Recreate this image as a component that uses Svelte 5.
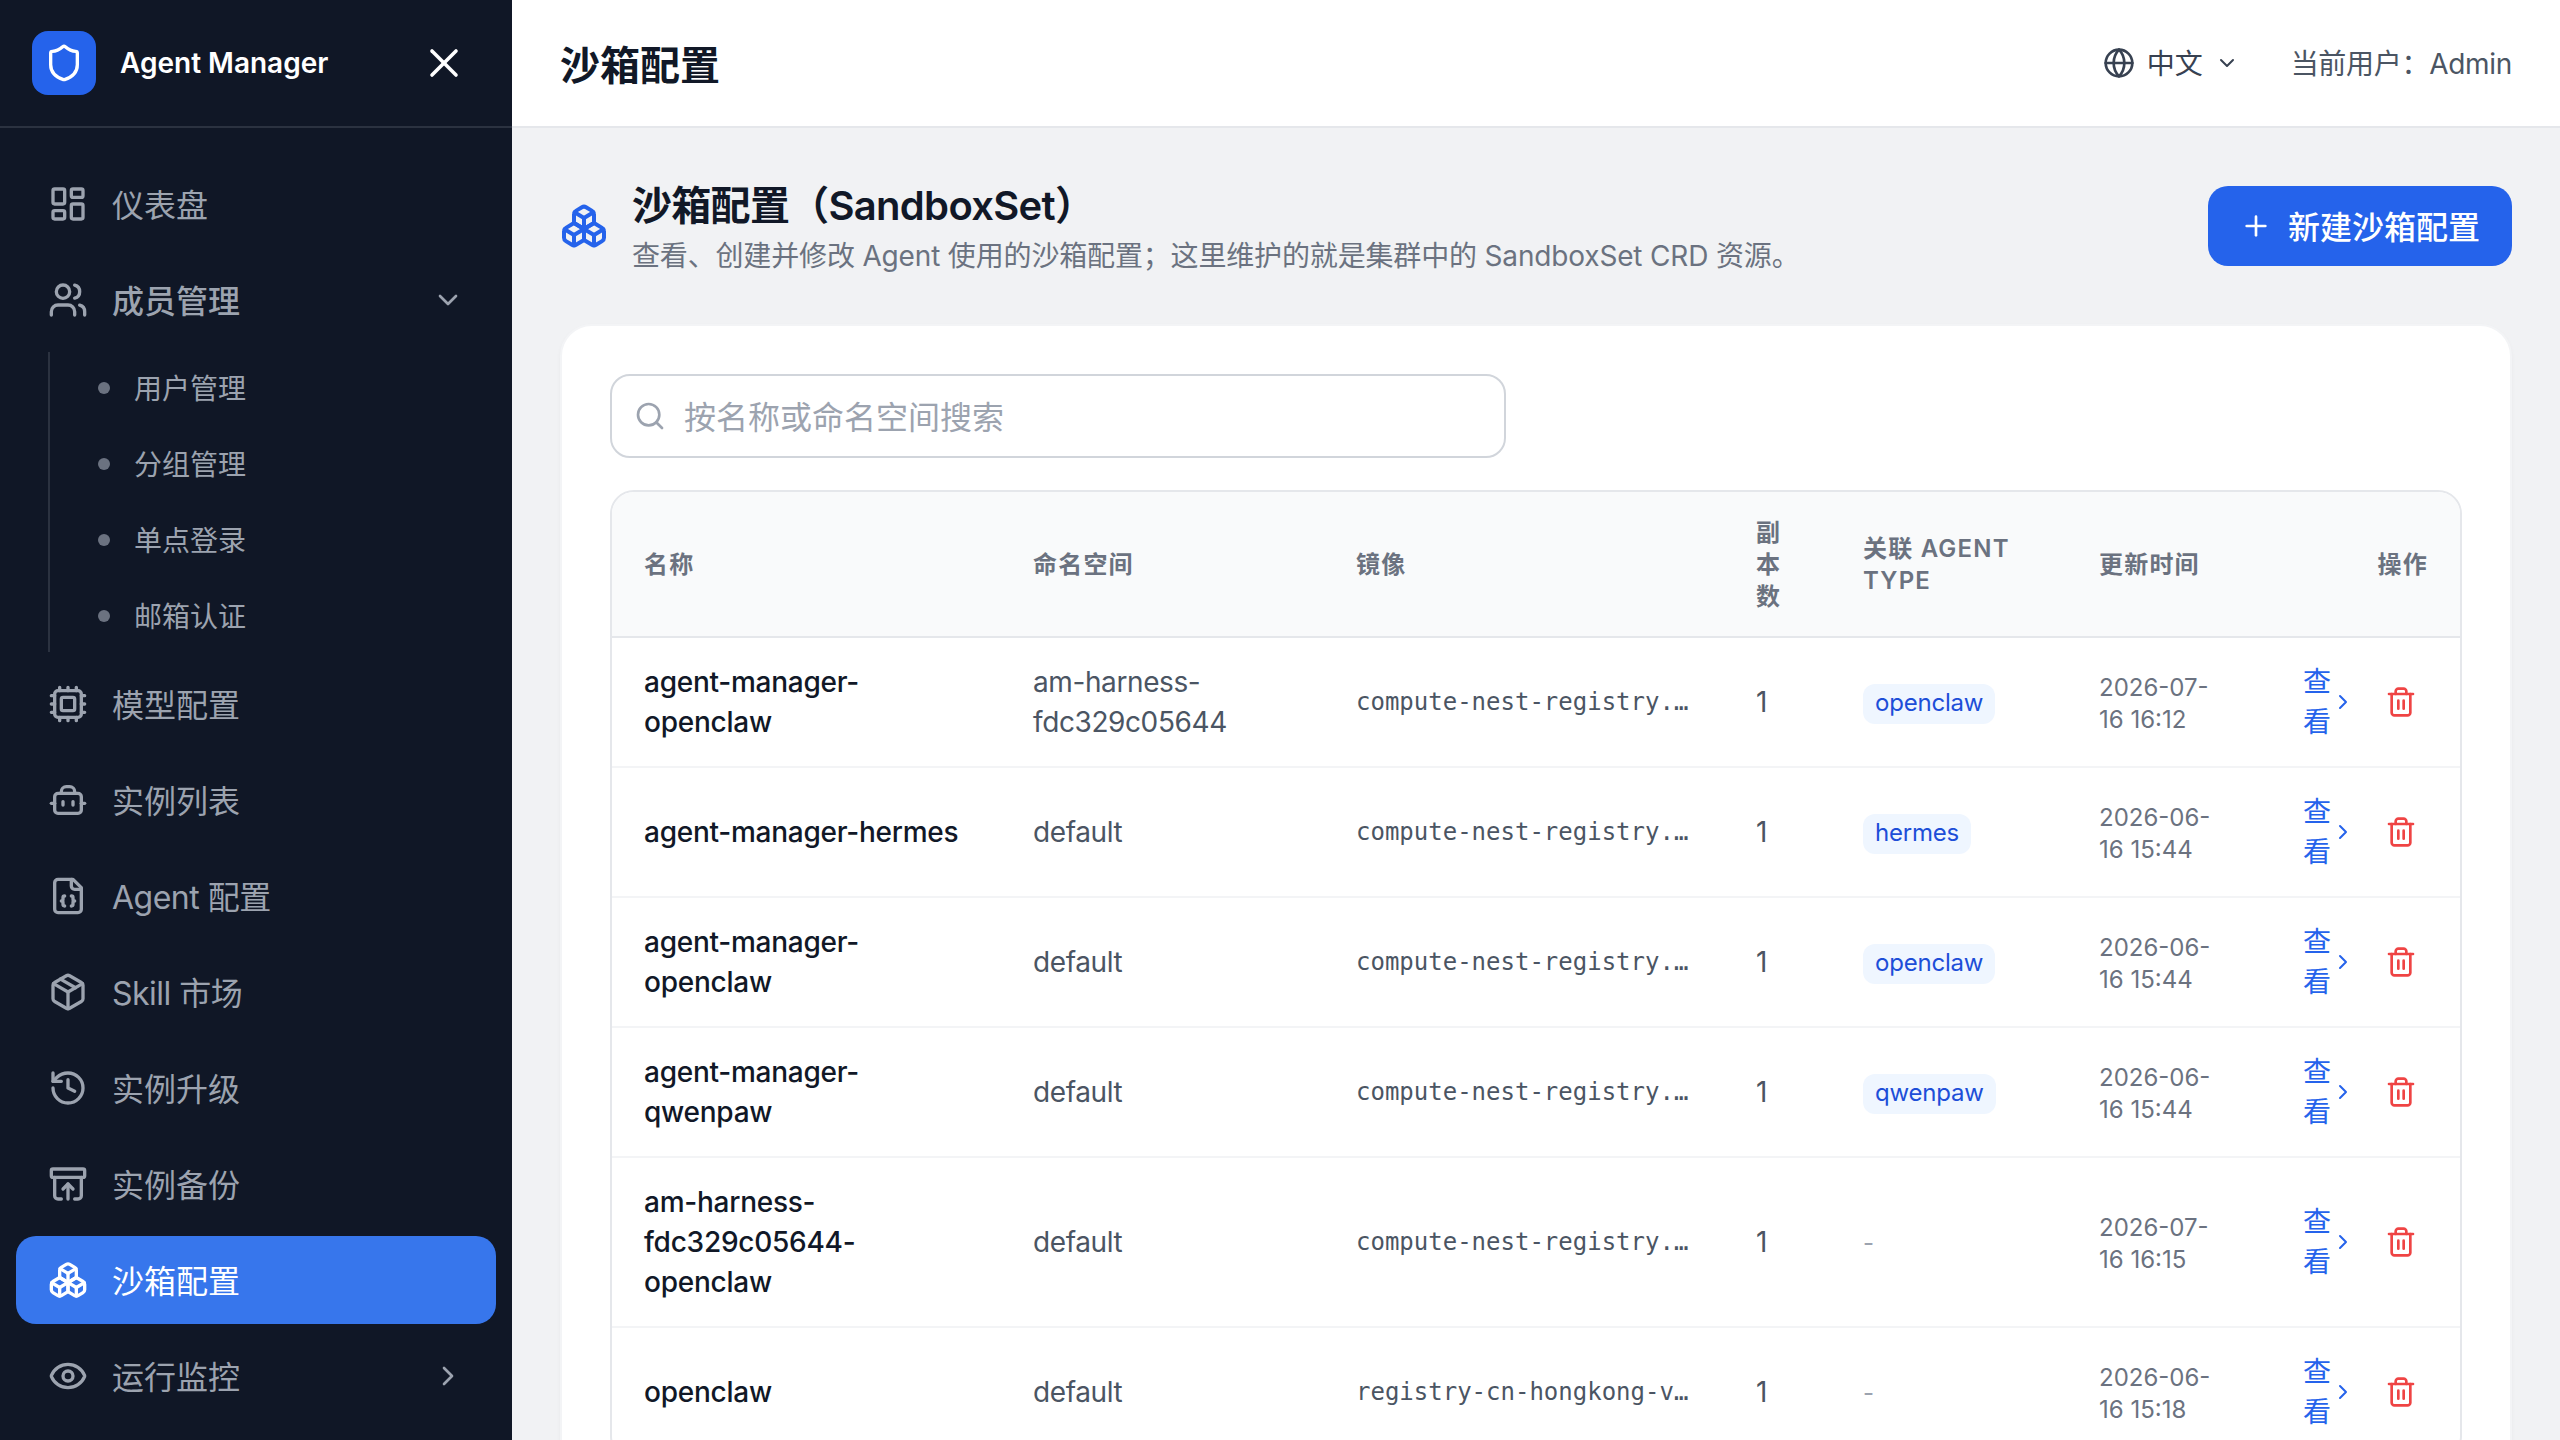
<script>
const icons = {
  shield: '<path d="M20 13c0 5-3.5 7.5-7.66 8.95a1 1 0 0 1-.67-.01C7.5 20.5 4 18 4 13V6a1 1 0 0 1 1-1c2 0 4.5-1.2 6.24-2.72a1.17 1.17 0 0 1 1.52 0C14.51 3.81 17 5 19 5a1 1 0 0 1 1 1z"/>',
  x: '<path d="M18 6 6 18"/><path d="m6 6 12 12"/>',
  dashboard: '<rect width="7" height="9" x="3" y="3" rx="1"/><rect width="7" height="5" x="14" y="3" rx="1"/><rect width="7" height="9" x="14" y="12" rx="1"/><rect width="7" height="5" x="3" y="16" rx="1"/>',
  users: '<path d="M16 21v-2a4 4 0 0 0-4-4H6a4 4 0 0 0-4 4v2"/><circle cx="9" cy="7" r="4"/><path d="M22 21v-2a4 4 0 0 0-3-3.87"/><path d="M16 3.13a4 4 0 0 1 0 7.75"/>',
  cpu: '<path d="M12 20v2M12 2v2M17 20v2M17 2v2M2 12h2M2 17h2M2 7h2M20 12h2M20 17h2M20 7h2M7 20v2M7 2v2"/><rect x="4" y="4" width="16" height="16" rx="2"/><rect x="8" y="8" width="8" height="8" rx="1"/>',
  bot: '<path d="M8 8V7a3 3 0 0 1 3-3h2a3 3 0 0 1 3 3v1"/><rect width="16" height="12" x="4" y="8" rx="2"/><path d="M2 14h2"/><path d="M20 14h2"/><path d="M15 13v2"/><path d="M9 13v2"/>',
  file: '<path d="M15 2H6a2 2 0 0 0-2 2v16a2 2 0 0 0 2 2h12a2 2 0 0 0 2-2V7Z"/><path d="M14 2v4a2 2 0 0 0 2 2h4"/><path d="M10 12a1 1 0 0 0-1 1v1a1 1 0 0 1-1 1 1 1 0 0 1 1 1v1a1 1 0 0 0 1 1"/><path d="M14 18a1 1 0 0 0 1-1v-1a1 1 0 0 1 1-1 1 1 0 0 1-1-1v-1a1 1 0 0 0-1-1"/>',
  pack: '<path d="M11 21.73a2 2 0 0 0 2 0l7-4A2 2 0 0 0 21 16V8a2 2 0 0 0-1-1.73l-7-4a2 2 0 0 0-2 0l-7 4A2 2 0 0 0 3 8v8a2 2 0 0 0 1 1.73z"/><path d="M12 22V12"/><path d="m3.3 7 8.7 5 8.7-5"/><path d="m7.5 4.27 9 5.15"/>',
  history: '<path d="M3 12a9 9 0 1 0 9-9 9.75 9.75 0 0 0-6.74 2.74L3 8"/><path d="M3 3v5h5"/><path d="M12 7v5l4 2"/>',
  archive: '<rect width="20" height="5" x="2" y="3" rx="1"/><path d="M4 8v11a2 2 0 0 0 2 2h2"/><path d="M20 8v11a2 2 0 0 1-2 2h-2"/><path d="m9 15 3-3 3 3"/><path d="M12 12v9"/>',
  boxes: '<path d="M2.97 12.92A2 2 0 0 0 2 14.63v3.24a2 2 0 0 0 .97 1.71l3 1.8a2 2 0 0 0 2.06 0L12 19v-5.5l-5-3-4.03 2.42Z"/><path d="m7 16.5-4.74-2.85"/><path d="m7 16.5 5-3"/><path d="M7 16.5v5.17"/><path d="M12 13.5V19l3.97 2.38a2 2 0 0 0 2.06 0l3-1.8a2 2 0 0 0 .97-1.71v-3.24a2 2 0 0 0-.97-1.71L17 10.5l-5 3Z"/><path d="m17 16.5-5-3"/><path d="m17 16.5 4.74-2.85"/><path d="M17 16.5v5.17"/><path d="M7.97 4.42A2 2 0 0 0 7 6.13v4.37l5 3 5-3V6.13a2 2 0 0 0-.97-1.71l-3-1.8a2 2 0 0 0-2.06 0l-3 1.8Z"/><path d="M12 8 7.26 5.15"/><path d="m12 8 4.74-2.85"/><path d="M12 13.5V8"/>',
  eye: '<path d="M2.062 12.348a1 1 0 0 1 0-.696 10.75 10.75 0 0 1 19.876 0 1 1 0 0 1 0 .696 10.75 10.75 0 0 1-19.876 0"/><circle cx="12" cy="12" r="3"/>',
  globe: '<circle cx="12" cy="12" r="10"/><path d="M12 2a14.5 14.5 0 0 0 0 20 14.5 14.5 0 0 0 0-20"/><path d="M2 12h20"/>',
  search: '<path d="m21 21-4.34-4.34"/><circle cx="11" cy="11" r="8"/>',
  plus: '<path d="M5 12h14"/><path d="M12 5v14"/>',
  down: '<path d="m6 9 6 6 6-6"/>',
  right: '<path d="m9 18 6-6-6-6"/>',
  trash: '<path d="M3 6h18"/><path d="M19 6v14c0 1-1 2-2 2H7c-1 0-2-1-2-2V6"/><path d="M8 6V4c0-1 1-2 2-2h4c1 0 2 1 2 2v2"/><line x1="10" x2="10" y1="11" y2="17"/><line x1="14" x2="14" y1="11" y2="17"/>'
};

const subItems = ['用户管理', '分组管理', '单点登录', '邮箱认证'];

const navAfter = [
  { icon: 'cpu', label: '模型配置' },
  { icon: 'bot', label: '实例列表' },
  { icon: 'file', label: 'Agent 配置', latin: true },
  { icon: 'pack', label: 'Skill 市场', latin: true },
  { icon: 'history', label: '实例升级' },
  { icon: 'archive', label: '实例备份' },
  { icon: 'boxes', label: '沙箱配置', active: true }
];

const longImage = 'compute-nest-registry.cn-hangzhou.cr.aliyuncs.com/agent/sandbox:latest';

const rows = [
  { name: 'agent-manager-openclaw', ns: 'am-harness-fdc329c05644', image: longImage, agent: 'openclaw', time: '2026-07-16 16:12' },
  { name: 'agent-manager-hermes', ns: 'default', image: longImage, agent: 'hermes', time: '2026-06-16 15:44' },
  { name: 'agent-manager-openclaw', ns: 'default', image: longImage, agent: 'openclaw', time: '2026-06-16 15:44' },
  { name: 'agent-manager-qwenpaw', ns: 'default', image: longImage, agent: 'qwenpaw', time: '2026-06-16 15:44' },
  { name: 'am-harness-fdc329c05644-openclaw', ns: 'default', image: longImage, agent: '', time: '2026-07-16 16:15' },
  { name: 'openclaw', ns: 'default', image: 'registry-cn-hongkong-vpc.ack.aliyuncs.com/openclaw/sandbox:latest', agent: '', time: '2026-06-16 15:18' }
];
</script>

{#snippet icon(name, size, sw = 2)}
  <svg class="icon" width={size} height={size} viewBox="0 0 24 24" fill="none" stroke="currentColor" stroke-width={sw} stroke-linecap="round" stroke-linejoin="round">{@html icons[name]}</svg>
{/snippet}

<div class="app">
  <aside class="sidebar">
    <div class="brand">
      <div class="logo">{@render icon('shield', 40)}</div>
      <span class="brand-name">Agent Manager</span>
      <button class="close">{@render icon('x', 48, 1.8)}</button>
    </div>
    <nav class="nav">
      <div class="item">{@render icon('dashboard', 40)}<span class="label">仪表盘</span></div>
      <div class="item group">
        {@render icon('users', 40)}<span class="label">成员管理</span>
        <span class="caret">{@render icon('down', 32)}</span>
      </div>
      <div class="sub">
        {#each subItems as s}
          <div class="sub-item"><i class="dot"></i><span class="label">{s}</span></div>
        {/each}
      </div>
      {#each navAfter as n}
        <div class="item" class:active={n.active} class:latin={n.latin}>{@render icon(n.icon, 40)}<span class="label">{n.label}</span></div>
      {/each}
      <div class="item">
        {@render icon('eye', 40)}<span class="label">运行监控</span>
        <span class="caret">{@render icon('right', 32)}</span>
      </div>
    </nav>
  </aside>

  <div class="main">
    <header class="topbar">
      <h1>沙箱配置</h1>
      <div class="top-right">
        <div class="lang">
          {@render icon('globe', 32)}<span class="label">中文</span>
          {@render icon('down', 24)}
        </div>
        <div class="user">当前用户：Admin</div>
      </div>
    </header>

    <main class="content">
      <div class="page-head">
        <div class="head-left">
          <span class="head-icon">{@render icon('boxes', 48)}</span>
          <div>
            <h2>沙箱配置（SandboxSet）</h2>
            <p>查看、创建并修改 Agent 使用的沙箱配置；这里维护的就是集群中的 SandboxSet CRD 资源。</p>
          </div>
        </div>
        <button class="primary">{@render icon('plus', 32)}<span class="label">新建沙箱配置</span></button>
      </div>

      <section class="card">
        <div class="search">
          {@render icon('search', 32)}
          <span class="label">按名称或命名空间搜索</span>
        </div>
        <div class="table-wrap">
          <table>
            <colgroup>
              <col style="width:389px" />
              <col style="width:323px" />
              <col style="width:400px" />
              <col style="width:107px" />
              <col style="width:236px" />
              <col style="width:184px" />
              <col />
            </colgroup>
            <thead>
              <tr>
                <th>名称</th>
                <th>命名空间</th>
                <th>镜像</th>
                <th>副本数</th>
                <th>关联 Agent Type</th>
                <th>更新时间</th>
                <th class="right">操作</th>
              </tr>
            </thead>
            <tbody>
              {#each rows as r}
                <tr>
                  <td class="name">{r.name}</td>
                  <td class="ns">{r.ns}</td>
                  <td><div class="image">{r.image}</div></td>
                  <td class="ns">1</td>
                  <td>
                    {#if r.agent}
                      <span class="tag">{r.agent}</span>
                    {:else}
                      <span class="none">-</span>
                    {/if}
                  </td>
                  <td class="time">{r.time}</td>
                  <td>
                    <div class="ops">
                      <a class="view" href="#top"><span>查看</span>{@render icon('right', 24)}</a>
                      <button class="del">{@render icon('trash', 32)}</button>
                    </div>
                  </td>
                </tr>
              {/each}
            </tbody>
          </table>
        </div>
      </section>
    </main>
  </div>
</div>

<style>
  :global(body) {
    margin: 0;
    font-family: Inter, "Noto Sans CJK SC", sans-serif;
  }

  .app {
    display: flex;
    height: 100vh;
    overflow: hidden;
    background: #f1f2f4;
  }

  .icon {
    display: block;
    flex: none;
  }

  /* CJK sits a little low in Noto compared to the reference font */
  .label {
    margin-top: -3px;
  }

  button {
    font: inherit;
    border: 0;
    background: none;
    padding: 0;
    cursor: pointer;
  }

  /* sidebar */
  .sidebar {
    width: 512px;
    flex: none;
    background: #101726;
    color: #9ca3af;
  }

  .brand {
    display: flex;
    align-items: center;
    gap: 24px;
    padding: 0 32px;
    box-sizing: border-box;
    border-bottom: 2px solid #2b3240;
    height: 128px;
  }

  .logo {
    width: 64px;
    height: 64px;
    border-radius: 16px;
    background: #2563eb;
    color: #fff;
    display: flex;
    align-items: center;
    justify-content: center;
  }

  .brand-name {
    flex: 1;
    color: #fff;
    font-size: 28px;
    font-weight: 600;
  }

  .close {
    color: #fff;
    margin-right: 12px;
  }

  .nav {
    display: flex;
    flex-direction: column;
    gap: 8px;
    padding: 32px 16px;
  }

  .item {
    height: 88px;
    display: flex;
    align-items: center;
    gap: 24px;
    padding: 0 32px;
    border-radius: 20px;
    font-size: 32px;
  }

  .item.latin {
    letter-spacing: -0.5px;
  }

  .group {
    font-weight: 500;
  }

  .item.active {
    background: #3776ec;
    color: #fff;
  }

  .caret {
    margin-left: auto;
  }

  .sub {
    margin-left: 32px;
    border-left: 2px solid #2b3240;
    padding: 6px 0;
    display: flex;
    flex-direction: column;
    gap: 16px;
  }

  .sub-item {
    height: 60px;
    display: flex;
    align-items: center;
    gap: 24px;
    padding-left: 48px;
    font-size: 28px;
  }

  .dot {
    width: 12px;
    height: 12px;
    border-radius: 50%;
    background: #6b7280;
  }

  /* top bar */
  .main {
    flex: 1;
    min-width: 0;
  }

  .topbar {
    height: 128px;
    box-sizing: border-box;
    background: #fff;
    border-bottom: 2px solid #e5e7eb;
    display: flex;
    align-items: center;
    justify-content: space-between;
    padding: 0 48px;
  }

  h1 {
    margin: 0;
    font-size: 40px;
    font-weight: 700;
    color: #111827;
  }

  .top-right {
    display: flex;
    align-items: center;
    gap: 52px;
    font-size: 28px;
    color: #4b5563;
  }

  .lang {
    display: flex;
    align-items: center;
    gap: 12px;
    color: #374151;
  }

  .user {
    margin-top: -3px;
    letter-spacing: -0.3px;
  }

  /* content */
  .content {
    padding: 48px;
  }

  .page-head {
    display: flex;
    align-items: center;
    justify-content: space-between;
    margin-bottom: 48px;
  }

  .head-left {
    display: flex;
    align-items: center;
    gap: 24px;
  }

  .head-icon {
    color: #2563eb;
  }

  h2 {
    margin: 2px 0 2px;
    font-size: 40px;
    line-height: 56px;
    font-weight: 600;
    letter-spacing: -0.7px;
    color: #111827;
  }

  .head-left p {
    margin: 0;
    font-size: 28px;
    line-height: 40px;
    letter-spacing: -0.16px;
    color: #6b7280;
  }

  .primary {
    width: 304px;
    height: 80px;
    border-radius: 20px;
    background: #2563eb;
    color: #fff;
    font-size: 32px;
    font-weight: 500;
    display: flex;
    align-items: center;
    justify-content: center;
    gap: 16px;
  }

  .card {
    background: #fff;
    border: 2px solid #f3f4f6;
    border-radius: 32px;
    padding: 48px;
    box-shadow: 0 2px 4px rgba(0, 0, 0, 0.04);
  }

  .search {
    width: 896px;
    height: 84px;
    box-sizing: border-box;
    border: 2px solid #d1d5db;
    border-radius: 20px;
    display: flex;
    align-items: center;
    gap: 18px;
    padding: 0 22px;
    margin-bottom: 32px;
    font-size: 32px;
    color: #9ca3af;
  }

  .table-wrap {
    border: 2px solid #e5e7eb;
    border-radius: 24px;
    overflow: hidden;
  }

  table {
    width: 100%;
    table-layout: fixed;
    border-collapse: separate;
    border-spacing: 0;
  }

  th {
    background: #f9fafb;
    border-bottom: 2px solid #e5e7eb;
    padding: 25px 32px 23px;
    font-size: 24px;
    line-height: 32px;
    font-weight: 600;
    letter-spacing: 1.2px;
    text-transform: uppercase;
    text-align: left;
    color: #6b7280;
  }

  th.right {
    text-align: right;
  }

  td {
    padding: 24px 32px;
    border-bottom: 2px solid #f3f4f6;
    font-size: 28px;
    line-height: 40px;
    vertical-align: middle;
    color: #374151;
  }

  td.name {
    font-weight: 500;
    letter-spacing: -0.25px;
    color: #111827;
  }

  td.ns {
    letter-spacing: -0.4px;
    color: #4b5563;
  }

  td.time {
    padding-top: 26px;
    padding-bottom: 22px;
    font-size: 24px;
    line-height: 32px;
    color: #6b7280;
  }

  .image {
    font-family: "DejaVu Sans Mono", monospace;
    font-size: 24px;
    color: #4b5563;
    white-space: nowrap;
    overflow: hidden;
    text-overflow: ellipsis;
  }

  .tag {
    display: inline-block;
    height: 40px;
    line-height: 38px;
    padding: 0 12px;
    border-radius: 12px;
    background: #eff6ff;
    color: #1d4ed8;
    font-size: 24px;
    letter-spacing: -0.2px;
  }

  .none {
    color: #9ca3af;
    font-size: 24px;
  }

  .ops {
    display: flex;
    align-items: center;
    justify-content: flex-end;
    gap: 22px;
    padding-right: 3px;
  }

  .view {
    display: flex;
    align-items: center;
    color: #2563eb;
    text-decoration: none;
  }

  .view span {
    width: min-content;
  }

  .del {
    padding: 8px;
    color: #ef4444;
  }
</style>
